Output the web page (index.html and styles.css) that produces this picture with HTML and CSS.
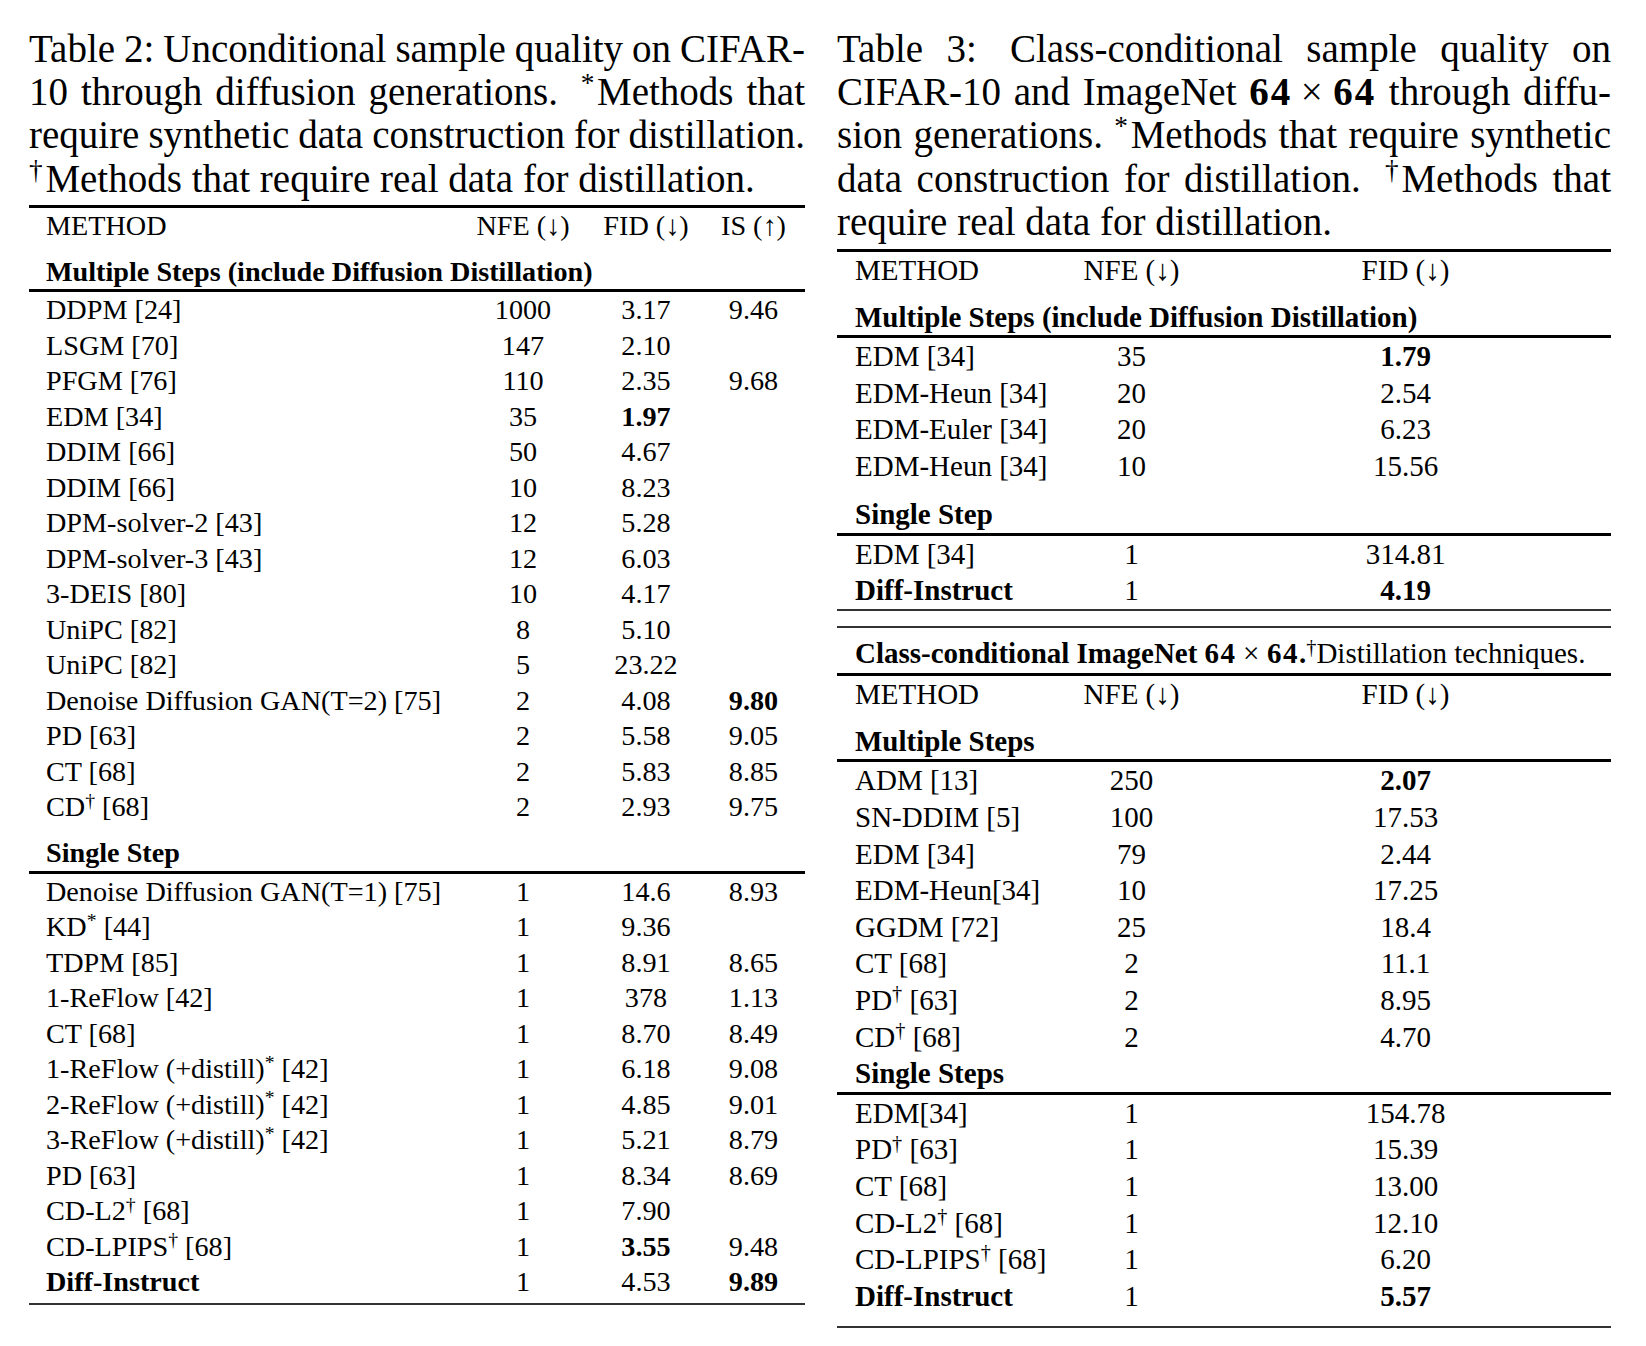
FILE: index.html
```html
<!DOCTYPE html>
<html lang="en">
<head>
<meta charset="utf-8">
<title>Diff-Instruct tables</title>
<link rel="stylesheet" href="styles.css">
</head>
<body>
<div class="page">
  <section class="col col-left">
    <p class="caption">
      <span class="ln">Table 2: Unconditional sample quality on CIFAR-</span>
      <span class="ln">10 through diffusion generations. <span class="gap"></span><sup class="s">*</sup>Methods that</span>
      <span class="ln">require synthetic data construction for distillation.</span>
      <span class="ln last"><sup class="s">†</sup>Methods that require real data for distillation.</span>
    </p>
    <table class="res t2">
      <colgroup><col class="c1"><col class="c2"><col class="c3"><col class="c4"></colgroup>
      <thead>
        <tr class="head"><th class="m">METHOD</th><th>NFE (↓)</th><th>FID (↓)</th><th class="is">IS (↑)</th></tr>
      </thead>
      <tbody>
        <tr class="sec first"><td class="m" colspan="4"><b>Multiple Steps (include Diffusion Distillation)</b></td></tr>
        <tr><td class="m">DDPM [24]</td><td>1000</td><td>3.17</td><td class="is">9.46</td></tr>
        <tr><td class="m">LSGM [70]</td><td>147</td><td>2.10</td><td class="is"></td></tr>
        <tr><td class="m">PFGM [76]</td><td>110</td><td>2.35</td><td class="is">9.68</td></tr>
        <tr><td class="m">EDM [34]</td><td>35</td><td><b>1.97</b></td><td class="is"></td></tr>
        <tr><td class="m">DDIM [66]</td><td>50</td><td>4.67</td><td class="is"></td></tr>
        <tr><td class="m">DDIM [66]</td><td>10</td><td>8.23</td><td class="is"></td></tr>
        <tr><td class="m">DPM-solver-2 [43]</td><td>12</td><td>5.28</td><td class="is"></td></tr>
        <tr><td class="m">DPM-solver-3 [43]</td><td>12</td><td>6.03</td><td class="is"></td></tr>
        <tr><td class="m">3-DEIS [80]</td><td>10</td><td>4.17</td><td class="is"></td></tr>
        <tr><td class="m">UniPC [82]</td><td>8</td><td>5.10</td><td class="is"></td></tr>
        <tr><td class="m">UniPC [82]</td><td>5</td><td>23.22</td><td class="is"></td></tr>
        <tr><td class="m">Denoise Diffusion GAN(T=2) [75]</td><td>2</td><td>4.08</td><td class="is"><b>9.80</b></td></tr>
        <tr><td class="m">PD [63]</td><td>2</td><td>5.58</td><td class="is">9.05</td></tr>
        <tr><td class="m">CT [68]</td><td>2</td><td>5.83</td><td class="is">8.85</td></tr>
        <tr><td class="m">CD<sup class="s">†</sup> [68]</td><td>2</td><td>2.93</td><td class="is">9.75</td></tr>
        <tr class="sec"><td class="m" colspan="4"><b>Single Step</b></td></tr>
        <tr><td class="m">Denoise Diffusion GAN(T=1) [75]</td><td>1</td><td>14.6</td><td class="is">8.93</td></tr>
        <tr><td class="m">KD<sup class="s">*</sup> [44]</td><td>1</td><td>9.36</td><td class="is"></td></tr>
        <tr><td class="m">TDPM [85]</td><td>1</td><td>8.91</td><td class="is">8.65</td></tr>
        <tr><td class="m">1-ReFlow [42]</td><td>1</td><td>378</td><td class="is">1.13</td></tr>
        <tr><td class="m">CT [68]</td><td>1</td><td>8.70</td><td class="is">8.49</td></tr>
        <tr><td class="m">1-ReFlow (+distill)<sup class="s">*</sup> [42]</td><td>1</td><td>6.18</td><td class="is">9.08</td></tr>
        <tr><td class="m">2-ReFlow (+distill)<sup class="s">*</sup> [42]</td><td>1</td><td>4.85</td><td class="is">9.01</td></tr>
        <tr><td class="m">3-ReFlow (+distill)<sup class="s">*</sup> [42]</td><td>1</td><td>5.21</td><td class="is">8.79</td></tr>
        <tr><td class="m">PD [63]</td><td>1</td><td>8.34</td><td class="is">8.69</td></tr>
        <tr><td class="m">CD-L2<sup class="s">†</sup> [68]</td><td>1</td><td>7.90</td><td class="is"></td></tr>
        <tr><td class="m">CD-LPIPS<sup class="s">†</sup> [68]</td><td>1</td><td><b>3.55</b></td><td class="is">9.48</td></tr>
        <tr class="end"><td class="m"><b>Diff-Instruct</b></td><td>1</td><td>4.53</td><td class="is"><b>9.89</b></td></tr>
      </tbody>
    </table>
  </section>

  <section class="col col-right">
    <p class="caption">
      <span class="ln">Table 3: <span class="gap"></span>Class-conditional sample quality on</span>
      <span class="ln">CIFAR-10 and ImageNet <b class="mth">64<span class="x">×</span>64</b> through diffu-</span>
      <span class="ln">sion generations. <sup class="s">*</sup>Methods that require synthetic</span>
      <span class="ln">data construction for distillation. <span class="gap"></span><sup class="s">†</sup>Methods that</span>
      <span class="ln last">require real data for distillation.</span>
    </p>
    <table class="res t3 t3a">
      <colgroup><col class="d1"><col class="d2"><col class="d3"></colgroup>
      <thead>
        <tr class="head"><th class="m">METHOD</th><th>NFE (↓)</th><th class="fid">FID (↓)</th></tr>
      </thead>
      <tbody>
        <tr class="sec first"><td class="m" colspan="3"><b>Multiple Steps (include Diffusion Distillation)</b></td></tr>
        <tr><td class="m">EDM [34]</td><td>35</td><td class="fid"><b>1.79</b></td></tr>
        <tr><td class="m">EDM-Heun [34]</td><td>20</td><td class="fid">2.54</td></tr>
        <tr><td class="m">EDM-Euler [34]</td><td>20</td><td class="fid">6.23</td></tr>
        <tr><td class="m">EDM-Heun [34]</td><td>10</td><td class="fid">15.56</td></tr>
        <tr class="sec single"><td class="m" colspan="3"><b>Single Step</b></td></tr>
        <tr><td class="m">EDM [34]</td><td>1</td><td class="fid">314.81</td></tr>
        <tr class="end"><td class="m"><b>Diff-Instruct</b></td><td>1</td><td class="fid"><b>4.19</b></td></tr>
      </tbody>
    </table>

    <table class="res t3 t3b">
      <colgroup><col class="d1"><col class="d2"><col class="d3"></colgroup>
      <thead>
        <tr class="cap"><th class="m" colspan="3"><b>Class-conditional ImageNet <span class="mth">64<span class="x">×</span>64</span>.</b><sup class="s">†</sup>Distillation techniques.</th></tr>
        <tr><th class="m">METHOD</th><th>NFE (↓)</th><th class="fid">FID (↓)</th></tr>
      </thead>
      <tbody>
        <tr class="sec first"><td class="m" colspan="3"><b>Multiple Steps</b></td></tr>
        <tr><td class="m">ADM [13]</td><td>250</td><td class="fid"><b>2.07</b></td></tr>
        <tr><td class="m">SN-DDIM [5]</td><td>100</td><td class="fid">17.53</td></tr>
        <tr><td class="m">EDM [34]</td><td>79</td><td class="fid">2.44</td></tr>
        <tr><td class="m">EDM-Heun[34]</td><td>10</td><td class="fid">17.25</td></tr>
        <tr><td class="m">GGDM [72]</td><td>25</td><td class="fid">18.4</td></tr>
        <tr><td class="m">CT [68]</td><td>2</td><td class="fid">11.1</td></tr>
        <tr><td class="m">PD<sup class="s">†</sup> [63]</td><td>2</td><td class="fid">8.95</td></tr>
        <tr><td class="m">CD<sup class="s">†</sup> [68]</td><td>2</td><td class="fid">4.70</td></tr>
        <tr class="sec tight"><td class="m" colspan="3"><b>Single Steps</b></td></tr>
        <tr><td class="m">EDM[34]</td><td>1</td><td class="fid">154.78</td></tr>
        <tr><td class="m">PD<sup class="s">†</sup> [63]</td><td>1</td><td class="fid">15.39</td></tr>
        <tr><td class="m">CT [68]</td><td>1</td><td class="fid">13.00</td></tr>
        <tr><td class="m">CD-L2<sup class="s">†</sup> [68]</td><td>1</td><td class="fid">12.10</td></tr>
        <tr><td class="m">CD-LPIPS<sup class="s">†</sup> [68]</td><td>1</td><td class="fid">6.20</td></tr>
        <tr class="end"><td class="m"><b>Diff-Instruct</b></td><td>1</td><td class="fid"><b>5.57</b></td></tr>
      </tbody>
    </table>
  </section>
</div>
</body>
</html>
```

FILE: styles.css
```css
html, body {
  margin: 0;
  padding: 0;
  background: #ffffff;
  color: #000000;
  font-family: "Liberation Serif", "Times New Roman", serif;
}

.page {
  display: flex;
  align-items: flex-start;
  gap: 32px;
  padding: 26.6px 0 0 29px;
}

.col-left { width: 776px; }
.col-right { width: 774px; }

/* captions */
.caption {
  margin: 0 0 5px;
  font-size: 39px;
  line-height: 43.4px;
}

.ln {
  display: block;
  text-align: justify;
  text-align-last: justify;
  text-justify: inter-word;
  word-spacing: -4px;
}

.ln.last {
  text-align-last: left;
  word-spacing: 0;
}

.gap {
  display: inline-block;
  width: 0.25em;
}

.s {
  display: inline-block;
  font-size: 0.7em;
  line-height: 0;
  vertical-align: 0.48em;
  word-spacing: 0;
}

.caption .s {
  margin-right: 0.1em;
}

.mth {
  font-weight: bold;
  letter-spacing: 0.05em;
}

.x {
  display: inline-block;
  margin: 0 0.22em;
  font-weight: normal;
}

/* tables */
.res {
  width: 100%;
  border-spacing: 0;
  table-layout: fixed;
}

.res th,
.res td {
  padding: 0;
  font-weight: normal;
  text-align: center;
  white-space: nowrap;
}

.res .m {
  text-align: left;
}

.res b { font-weight: bold; }

/* table 2 */
.t2 {
  font-size: 28.2px;
  line-height: 35.5px;
}

.t2 .c1 { width: 435px; }
.t2 .c2 { width: 118px; }
.t2 .c3 { width: 128px; }
.t2 .c4 { width: 95px; }

.t2 .m { padding-left: 17px; }
.t2 .is { padding-right: 8px; }

.t2 .head > * { border-top: 3px solid #000; }

.t2 .sec td {
  padding-top: 10.2px;
  border-bottom: 3px solid #000;
}

.t2 .end td {
  padding-bottom: 3px;
  border-bottom: 2px solid #333;
}

/* table 3 */
.t3 {
  font-size: 29px;
  line-height: 36.6px;
}

.t3 .d1 { width: 233px; }
.t3 .d2 { width: 123px; }
.t3 .d3 { width: 418px; }

.t3 .m { padding-left: 18px; }
.t3 .fid { padding-left: 7px; }

.t3a .head > * { border-top: 3px solid #000; }

.t3 .sec td { border-bottom: 3px solid #000; }
.t3 .sec.first td { padding-top: 10.4px; }
.t3 .sec.single td { padding-top: 11.4px; }
.t3 .sec.tight td { padding-top: 0; }

.t3a .end td { border-bottom: 2px solid #333; }

.t3b { margin-top: 15px; }

.t3b .cap th {
  padding-top: 7.5px;
  padding-bottom: 1px;
  border-top: 2px solid #333;
  border-bottom: 3px solid #000;
}

.t3b .end td {
  padding-bottom: 11.6px;
  border-bottom: 2px solid #333;
}
```
